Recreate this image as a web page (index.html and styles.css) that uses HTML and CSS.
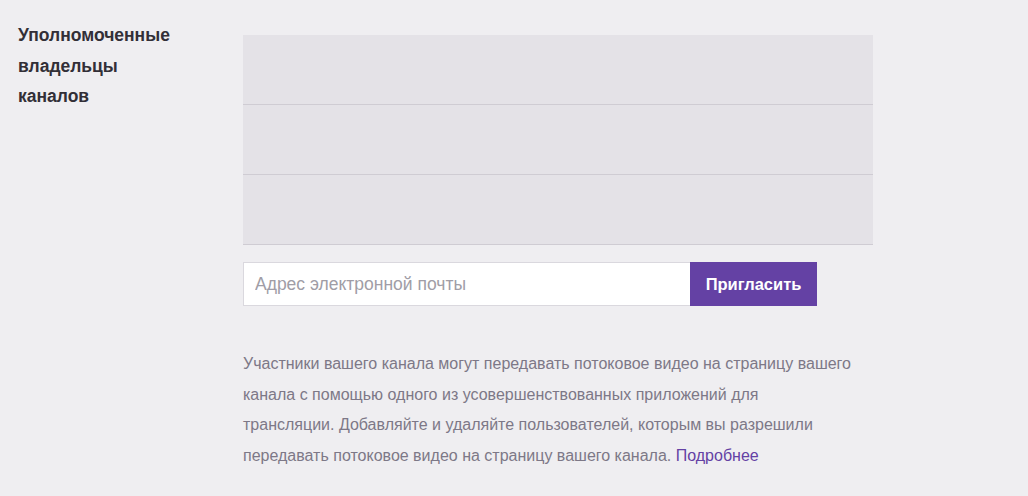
FILE: index.html
```html
<!DOCTYPE html>
<html lang="ru">
<head>
<meta charset="utf-8">
<link rel="stylesheet" href="styles.css">
</head>
<body>
<div class="section">
  <div class="label"><span class="label-text">Уполномоченные владельцы каналов</span></div>
  <div class="content">
    <div class="list">
      <div class="row"></div>
      <div class="row"></div>
      <div class="row"></div>
    </div>
    <div class="invite">
      <input class="email" type="text" placeholder="Адрес электронной почты">
      <button class="btn">Пригласить</button>
    </div>
    <p class="desc">Участники вашего канала могут передавать потоковое видео на страницу вашего канала с помощью одного из усовершенствованных приложений для трансляции. Добавляйте и удаляйте пользователей, которым вы разрешили передавать потоковое видео на страницу вашего канала. <a class="more" href="#">Подробнее</a></p>
  </div>
</div>
</body>
</html>
```
FILE: styles.css
```css
html, body {
  margin: 0;
  padding: 0;
  background: #efeef1;
  font-family: "Liberation Sans", Arial, sans-serif;
}
.section {
  display: flex;
  padding: 20px 0 0 18px;
}
.label {
  width: 225px;
  flex: none;
}
.label-text {
  display: block;
  width: 165px;
  font-size: 17.5px;
  font-weight: bold;
  line-height: 30.5px;
  color: #322f37;
}
.content {
  width: 640px;
  padding-top: 15px;
}
.list {
  width: 630px;
  display: flex;
  flex-direction: column;
}
.row {
  height: 69px;
  background: #e4e2e7;
  border-bottom: 1px solid #cfccd3;
}
.invite {
  display: flex;
  margin-top: 17px;
  height: 44px;
}
.email {
  width: 447px;
  box-sizing: border-box;
  border: 1px solid #dad8de;
  border-right: none;
  background: #fff;
  padding: 0 11px;
  font-family: "Liberation Sans", Arial, sans-serif;
  font-size: 17.5px;
  color: #333;
  outline: none;
}
.email::placeholder {
  color: #a09da6;
}
.btn {
  width: 127px;
  background: #6441a4;
  color: #fff;
  border: none;
  font-family: "Liberation Sans", Arial, sans-serif;
  font-size: 16.5px;
  font-weight: bold;
  padding: 0;
}
.desc {
  margin: 43px 0 0 0;
  font-size: 16px;
  line-height: 30.5px;
  color: #7d7887;
  width: 611px;
}
.more {
  color: #6441a4;
  text-decoration: none;
}
```
